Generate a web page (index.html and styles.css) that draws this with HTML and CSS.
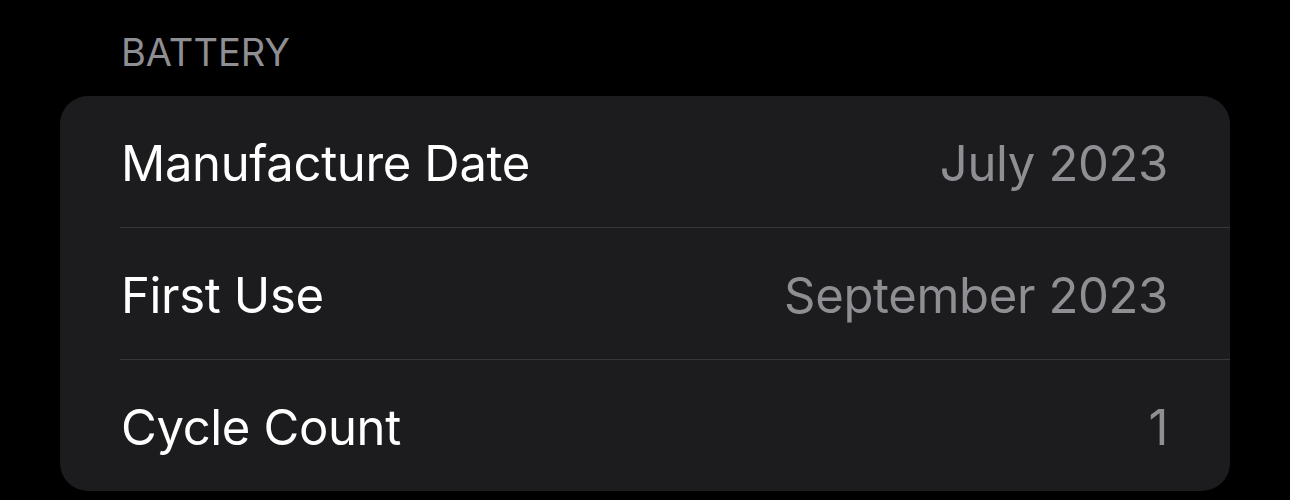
FILE: index.html
```html
<!DOCTYPE html>
<html lang="en">
<head>
    <meta charset="UTF-8">
    <meta name="viewport" content="width=device-width, initial-scale=1.0">
    <title>Battery</title>
    <link rel="stylesheet" href="styles.css">
</head>
<body>
    <div class="section">
        <div class="section-header">BATTERY</div>
        <div class="group">
            <div class="row">
                <span class="label">Manufacture Date</span>
                <span class="value">July 2023</span>
            </div>
            <div class="row">
                <span class="label">First Use</span>
                <span class="value">September 2023</span>
            </div>
            <div class="row">
                <span class="label">Cycle Count</span>
                <span class="value">1</span>
            </div>
        </div>
    </div>
</body>
</html>
```

FILE: styles.css
```css
body {
    margin: 0;
    background: #000;
    font-family: Inter, "Noto Sans", sans-serif;
    color: #fff;
}
.section {
    padding: 0 60px;
    width: 1170px;
}
.section-header {
    padding: 33px 0 0 61px;
    height: 96px;
    box-sizing: border-box;
    font-size: 38px;
    line-height: 38px;
    color: #8e8e93;
}
.group {
    background: #1c1c1e;
    border-radius: 28px;
    overflow: hidden;
}
.row {
    display: flex;
    justify-content: space-between;
    align-items: center;
    height: 128px;
    margin-left: 60px;
    padding: 3px 62px 0 1px;
    font-size: 49px;
    letter-spacing: -0.35px;
    border-bottom: 1px solid #38383a;
}
.row:last-child {
    border-bottom: none;
}
.value {
    color: #8e8e93;
}
```
